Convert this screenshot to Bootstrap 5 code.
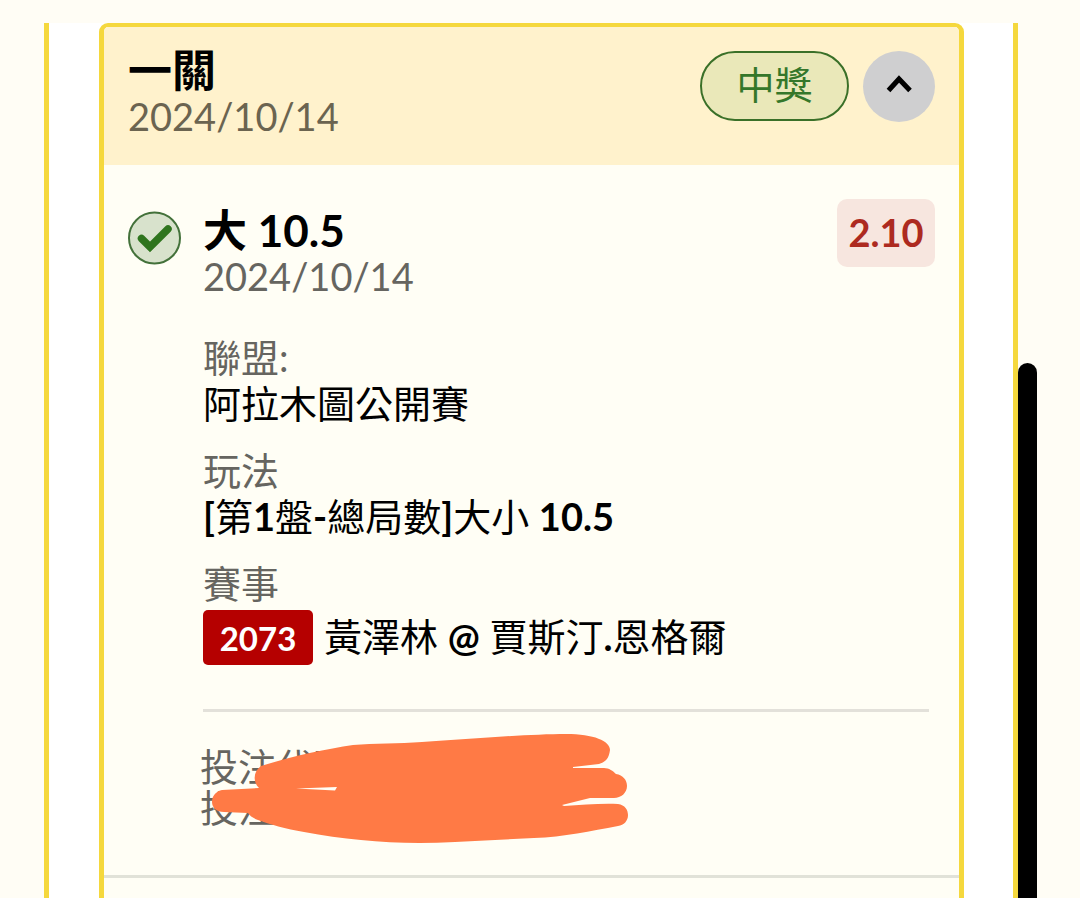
<!DOCTYPE html>
<html lang="zh-Hant">
<head>
<meta charset="utf-8">
<meta name="viewport" content="width=device-width, initial-scale=1">
<title>投注紀錄</title>
<link rel="stylesheet" href="https://cdn.jsdelivr.net/npm/bootstrap@5.3.0/dist/css/bootstrap.min.css">
<style>
  body { background: #fffdf5; color: #000; font-family: Lato, "Noto Sans CJK TC", sans-serif; font-size: 38px; line-height: 46px; }
  .page-wrap { padding: 23px 62px 0 44px; overflow: hidden; }
  .slip-frame { background: #fff; border: solid #f5d83d; border-width: 0 5px; padding: 0 49px 0 50px; }
  .slip { background: #fffef5; border: 5px solid #f5d83d; border-top-width: 4px; border-bottom: 0; border-radius: 9px 9px 0 0; }
  .slip-head { background: #fff2cc; padding: 20px 24px 26px; }
  .slip-title { font-size: 44px; line-height: 46px; font-weight: 700; }
  .muted { color: #666560; }
  .slip-head .muted { color: #6b6450; }
  .latin { font-weight: 700; }
  .actions { gap: 14px; margin-top: 4px; }
  .won { width: 149px; height: 70px; border: 2px solid #3a7028; border-radius: 35px; background: #eae8b9; color: #35772a; padding-bottom: 4px; }
  .toggle { width: 72px; height: 71px; background: #cfcfd0; }
  .slip-body { padding: 34px 24px 0; gap: 22px; }
  .tick { margin-top: 12px; }
  .pick { padding-top: 8px; }
  .odds { width: 98px; height: 68px; border-radius: 10px; background: #f7e6df; color: #ad2a20; font-weight: 700; padding-bottom: 2px; }
  .details { margin: 35px 6px 44px 0; }
  .details dd { margin-bottom: 21px; font-weight: 400; }
  .details dt { font-weight: 400; }
  .details .event { gap: 11px; margin: 4px 0 0; }
  .event-no { width: 110px; height: 55px; border-radius: 5px; background: #b50000; color: #fff; font-size: 33px; font-weight: 700; }
  .event-name { padding-bottom: 4px; }
  .codes { margin: 0 6px 0 0; border-top: 3px solid #e3e1da; padding: 34px 0 47px; line-height: 41px; }
  .codes-text { margin-left: -3px; }
  .scribble { position: absolute; left: 10px; top: -14px; }
  .slip-end { border-top: 3px solid #e1e2d8; min-height: 60px; }
  .thumb { position: fixed; right: 43px; top: 363px; bottom: 0; width: 19px; background: #000; border-radius: 10px 10px 0 0; }
</style>
</head>
<body>
<main class="page-wrap vh-100">
  <div class="slip-frame">
    <article class="slip overflow-hidden">
      <header class="slip-head d-flex justify-content-between align-items-start">
        <div>
          <h1 class="slip-title m-0">一關</h1>
          <div class="muted">2024/10/14</div>
        </div>
        <div class="actions d-flex">
          <span class="won d-flex align-items-center justify-content-center">中獎</span>
          <button type="button" class="toggle btn border-0 rounded-circle p-0 d-flex align-items-center justify-content-center" aria-label="收合">
            <svg width="72" height="71" viewBox="863 51 72 71" fill="none" stroke="#000" stroke-width="5"><path d="M888.5 90.5 899 79l11 11.500"/></svg>
          </button>
        </div>
      </header>
      <div class="slip-body d-flex align-items-start">
        <svg class="tick flex-shrink-0" width="53" height="54" viewBox="0 0 53 54" fill="none">
          <circle cx="26.500" cy="27" r="25.500" fill="#d8e2cc" stroke="#43713a" stroke-width="2"/>
          <path d="M13.500 27.500 22 36 40 18" stroke="#2f751e" stroke-width="7.500" stroke-linecap="round"/>
        </svg>
        <div class="flex-grow-1">
          <div class="d-flex justify-content-between align-items-start">
            <div class="pick">
              <h2 class="slip-title m-0">大 10.5</h2>
              <div class="muted">2024/10/14</div>
            </div>
            <div class="odds d-flex align-items-center justify-content-center">2.10</div>
          </div>
          <dl class="details">
            <dt class="muted">聯盟:</dt>
            <dd>阿拉木圖公開賽</dd>
            <dt class="muted">玩法</dt>
            <dd><span class="latin">[</span>第<span class="latin">1</span>盤<span class="latin">-</span>總局數<span class="latin">]</span>大小 <span class="latin">10.5</span></dd>
            <dt class="muted">賽事</dt>
            <dd class="event d-flex align-items-center">
              <span class="event-no d-flex align-items-center justify-content-center">2073</span>
              <span class="event-name">黃澤林 <span class="latin">@</span> 賈斯汀<span class="latin">.</span>恩格爾</span>
            </dd>
          </dl>
          <div class="codes">
            <div class="codes-text muted position-relative">
              <div>投注代碼</div>
              <div>投注</div>
              <svg class="scribble" width="420" height="114" viewBox="210 732 420 114" aria-hidden="true">
                <path fill="#ff7a45" d="M261 766C290 757 325 749 353 745C374 743 399 744 422 742C470 739 528 734 566 734C594 734 610 741 610 750C609 758 606 762 599 764L573 767L573 768L604 768C609 768 613 771 616 774C623 775 627 780 627 786C627 793 621 798 614 798L590 798L562 805L564 806C582 805 602 803 618 804C625 805 628 810 628 815C628 821 624 825 618 826C591 831 564 837 534 838L455 842C400 845 353 841 304 832C286 829 269 824 258 820C253 818 250 816 248 813L224 812C216 812 212 807 212 802C212 795 217 791 222 790L259 788C252 781 254 771 261 766Z"/>
                <path fill="#fffef5" d="M296 788.500 337 787 335 790.500Z"/>
              </svg>
            </div>
          </div>
        </div>
      </div>
      <div class="slip-end"></div>
    </article>
  </div>
</main>
<div class="thumb" aria-hidden="true"></div>
<script src="https://cdn.jsdelivr.net/npm/bootstrap@5.3.0/dist/js/bootstrap.bundle.min.js"></script>
</body>
</html>
